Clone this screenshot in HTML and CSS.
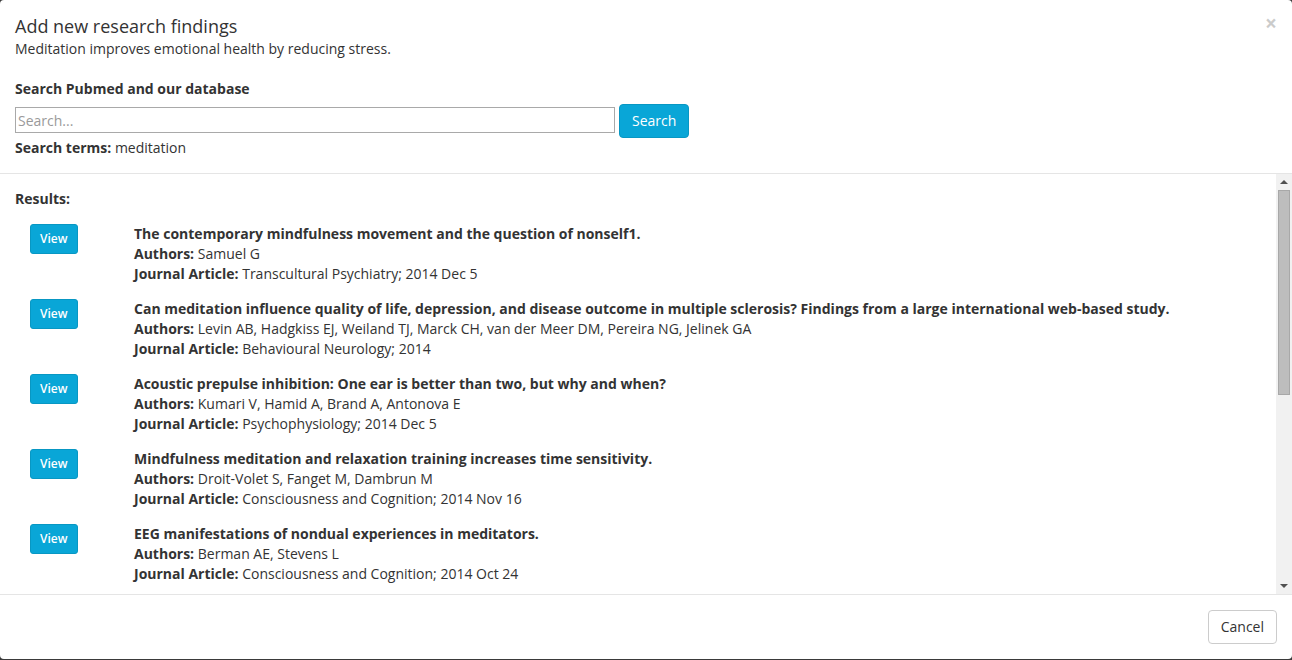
FILE: index.html
```html
<!DOCTYPE html>
<html>
<head>
<meta charset="utf-8">
<link rel="stylesheet" href="styles.css">
</head>
<body>
<div class="modal">
  <div class="modal-header">
    <button class="close" type="button">×</button>
    <h4 class="title">Add new research findings</h4>
    <p class="subtitle">Meditation improves emotional health by reducing stress.</p>
    <div class="search">
      <div class="label">Search Pubmed and our database</div>
      <div class="search-row">
        <input class="search-input" type="text" placeholder="Search...">
        <button class="btn btn-info" type="button">Search</button>
      </div>
      <p class="terms"><b>Search terms:</b> meditation</p>
    </div>
  </div>
  <div class="modal-body">
    <div class="body-content">
      <div class="results-label">Results:</div>
      <div class="result">
        <div class="result-action"><button class="btn btn-info btn-sm" type="button">View</button></div>
        <div class="result-info">
          <div class="result-title">The contemporary mindfulness movement and the question of nonself1.</div>
          <div><b>Authors:</b> Samuel G</div>
          <div><b>Journal Article:</b> Transcultural Psychiatry; 2014 Dec 5</div>
        </div>
      </div>
      <div class="result">
        <div class="result-action"><button class="btn btn-info btn-sm" type="button">View</button></div>
        <div class="result-info">
          <div class="result-title">Can meditation influence quality of life, depression, and disease outcome in multiple sclerosis? Findings from a large international web-based study.</div>
          <div><b>Authors:</b> Levin AB, Hadgkiss EJ, Weiland TJ, Marck CH, van der Meer DM, Pereira NG, Jelinek GA</div>
          <div><b>Journal Article:</b> Behavioural Neurology; 2014</div>
        </div>
      </div>
      <div class="result">
        <div class="result-action"><button class="btn btn-info btn-sm" type="button">View</button></div>
        <div class="result-info">
          <div class="result-title">Acoustic prepulse inhibition: One ear is better than two, but why and when?</div>
          <div><b>Authors:</b> Kumari V, Hamid A, Brand A, Antonova E</div>
          <div><b>Journal Article:</b> Psychophysiology; 2014 Dec 5</div>
        </div>
      </div>
      <div class="result">
        <div class="result-action"><button class="btn btn-info btn-sm" type="button">View</button></div>
        <div class="result-info">
          <div class="result-title">Mindfulness meditation and relaxation training increases time sensitivity.</div>
          <div><b>Authors:</b> Droit-Volet S, Fanget M, Dambrun M</div>
          <div><b>Journal Article:</b> Consciousness and Cognition; 2014 Nov 16</div>
        </div>
      </div>
      <div class="result">
        <div class="result-action"><button class="btn btn-info btn-sm" type="button">View</button></div>
        <div class="result-info">
          <div class="result-title">EEG manifestations of nondual experiences in meditators.</div>
          <div><b>Authors:</b> Berman AE, Stevens L</div>
          <div><b>Journal Article:</b> Consciousness and Cognition; 2014 Oct 24</div>
        </div>
      </div>
    </div>
    <div class="scrollbar" aria-hidden="true">
      <div class="sb-btn"><span class="arrow-up"></span></div>
      <div class="sb-track"><div class="sb-thumb"></div></div>
      <div class="sb-btn"><span class="arrow-down"></span></div>
    </div>
  </div>
  <div class="modal-footer">
    <button class="btn btn-default" type="button">Cancel</button>
  </div>
</div>
</body>
</html>
```
FILE: styles.css
```css
* { box-sizing: border-box; }
html, body {
  margin: 0;
  padding: 0;
  height: 660px;
  overflow: hidden;
}
body {
  background: #3a3a3a;
  font-family: "Open Sans", "Liberation Sans", sans-serif;
  font-size: 14px;
  line-height: 20px;
  color: #333;
}
.modal {
  position: relative;
  width: 1292px;
  height: 659px;
  background: #fff;
  border-radius: 4px;
  display: flex;
  flex-direction: column;
  overflow: hidden;
}
.modal-header {
  padding: 15px;
  border-bottom: 1px solid #e5e5e5;
  flex: none;
}
.close {
  position: absolute;
  top: 13px;
  right: 15px;
  border: 0;
  background: none;
  padding: 0;
  font-family: "Open Sans", "Liberation Sans", sans-serif;
  font-size: 21px;
  font-weight: 700;
  line-height: 21px;
  color: #000;
  opacity: 0.2;
  cursor: pointer;
}
.title {
  margin: 0;
  font-size: 18px;
  font-weight: 400;
  line-height: 22px;
}
.subtitle {
  margin: 2px 0 0;
}
.search {
  margin-top: 20px;
}
.label {
  font-weight: 700;
  margin-bottom: 5px;
}
.search-row {
  display: flex;
  align-items: center;
  gap: 4px;
}
.search-input {
  width: 600px;
  height: 26px;
  margin-bottom: 2px;
  border: 1px solid #a9a9a9;
  padding: 1px 2px;
  font-family: "Open Sans", "Liberation Sans", sans-serif;
  font-size: 14px;
  color: #333;
  outline: none;
}
.search-input::placeholder { color: #9a9a9a; }
.btn {
  font-family: "Open Sans", "Liberation Sans", sans-serif;
  font-size: 14px;
  line-height: 20px;
  padding: 6px 12px;
  border-radius: 4px;
  border: 1px solid transparent;
  cursor: pointer;
}
.btn-info {
  background: #09a6d7;
  border-color: #0897c3;
  color: #fff;
}
.btn-sm {
  font-size: 12px;
  font-weight: 600;
  line-height: 18px;
  padding: 5px 9px;
  border-radius: 3px;
}
.btn-default {
  background: #fff;
  border-color: #ccc;
  color: #333;
}
.terms {
  margin: 0;
}
.modal-body {
  flex: none;
  height: 420px;
  display: flex;
}
.body-content {
  flex: 1;
  min-width: 0;
  overflow: hidden;
  padding: 15px;
}
.scrollbar {
  flex: none;
  width: 16px;
  background: #f1f1f1;
  display: flex;
  flex-direction: column;
}
.sb-btn {
  flex: none;
  height: 16px;
  display: flex;
  align-items: center;
  justify-content: center;
}
.arrow-up, .arrow-down {
  width: 0;
  height: 0;
  border-left: 4px solid transparent;
  border-right: 4px solid transparent;
}
.arrow-up { border-bottom: 4px solid #505050; }
.arrow-down { border-top: 4px solid #505050; }
.sb-track {
  flex: 1;
  padding: 0 2px;
}
.sb-thumb {
  height: 205px;
  background: #bdbdbd;
  border: 1px solid #a8a8a8;
}
.results-label {
  font-weight: 700;
  margin-bottom: 15px;
}
.result {
  display: grid;
  grid-template-columns: 104px 1fr;
  margin-bottom: 15px;
}
.result-action {
  padding: 0 15px;
}
.result-info {
  padding: 0 15px;
}
.result-info b, .result-title {
  font-weight: 700;
}
.modal-footer {
  flex: 1;
  border-top: 1px solid #e5e5e5;
  padding: 15px;
  display: flex;
  justify-content: flex-end;
  align-items: flex-start;
}
```
